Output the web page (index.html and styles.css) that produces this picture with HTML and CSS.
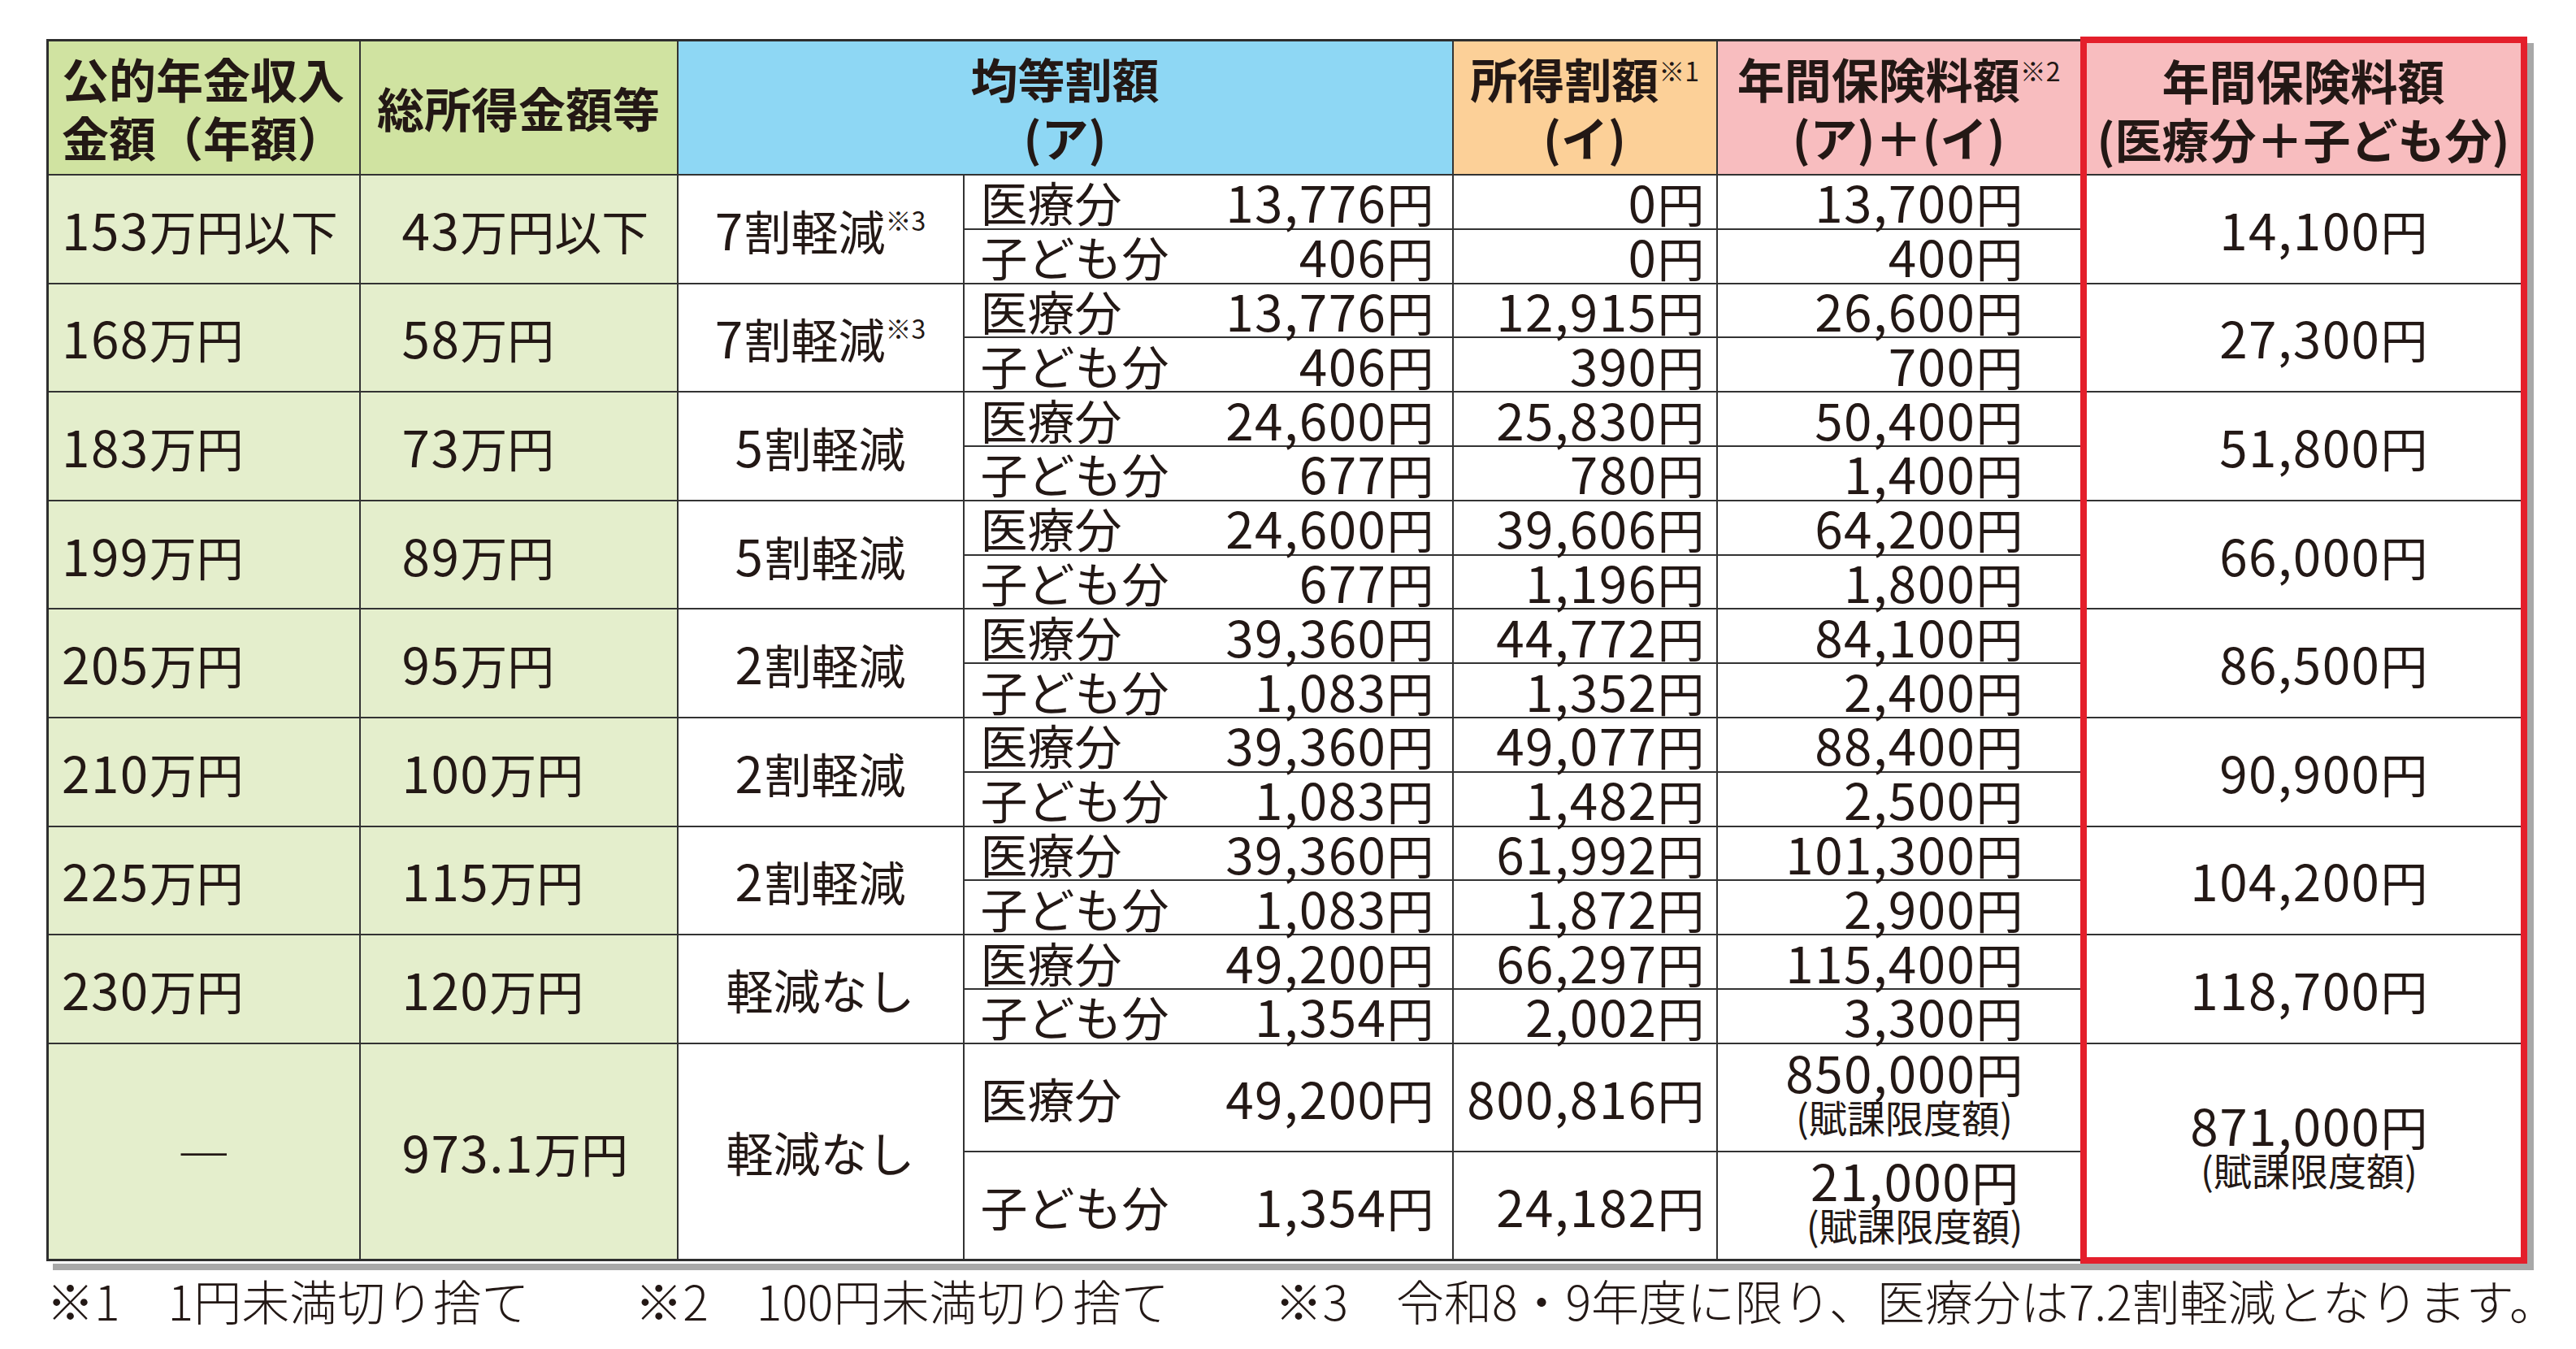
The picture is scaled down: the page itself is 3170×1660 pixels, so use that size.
FILE: index.html
```html
<!DOCTYPE html>
<html lang="ja">
<head>
<meta charset="utf-8">
<title>国民健康保険料 試算表</title>
<link rel="stylesheet" href="styles.css">
</head>
<body>
<div class="page">
  <table class="fee">
    <colgroup>
      <col class="w1"><col class="w2"><col class="w3"><col class="w4"><col class="w5"><col class="w6"><col class="w7">
    </colgroup>
    <thead>
      <tr class="hrow">
        <th class="h-green left">公的年金収入<br>金額（年額）</th>
        <th class="h-green">総所得金額等</th>
        <th class="h-blue" colspan="2">均等割額<br>(ア)</th>
        <th class="h-orange">所得割額<span class="sup">※1</span><br>(イ)</th>
        <th class="h-pink">年間保険料額<span class="sup">※2</span><br>(ア)＋(イ)</th>
        <th class="h-pink red red-top">年間保険料額<br>(医療分＋子ども分)</th>
      </tr>
    </thead>
    <tbody>
      <tr class="srow">
        <td class="g c1" rowspan="2"><span class="n">153</span>万円以下</td>
        <td class="g c2" rowspan="2"><span class="n">43</span>万円以下</td>
        <td class="c3" rowspan="2"><span class="n">7</span>割軽減<span class="sup">※3</span></td>
        <td class="c4"><div class="split"><span>医療分</span><span><span class="n">13,776</span>円</span></div></td>
        <td class="c5"><span class="n">0</span>円</td>
        <td class="c6"><span class="n">13,700</span>円</td>
        <td class="c7 red" rowspan="2"><span class="n">14,100</span>円</td>
      </tr>
      <tr class="srow">
        <td class="c4"><div class="split"><span>子ども分</span><span><span class="n">406</span>円</span></div></td>
        <td class="c5"><span class="n">0</span>円</td>
        <td class="c6"><span class="n">400</span>円</td>
      </tr>

      <tr class="srow">
        <td class="g c1" rowspan="2"><span class="n">168</span>万円</td>
        <td class="g c2" rowspan="2"><span class="n">58</span>万円</td>
        <td class="c3" rowspan="2"><span class="n">7</span>割軽減<span class="sup">※3</span></td>
        <td class="c4"><div class="split"><span>医療分</span><span><span class="n">13,776</span>円</span></div></td>
        <td class="c5"><span class="n">12,915</span>円</td>
        <td class="c6"><span class="n">26,600</span>円</td>
        <td class="c7 red" rowspan="2"><span class="n">27,300</span>円</td>
      </tr>
      <tr class="srow">
        <td class="c4"><div class="split"><span>子ども分</span><span><span class="n">406</span>円</span></div></td>
        <td class="c5"><span class="n">390</span>円</td>
        <td class="c6"><span class="n">700</span>円</td>
      </tr>

      <tr class="srow">
        <td class="g c1" rowspan="2"><span class="n">183</span>万円</td>
        <td class="g c2" rowspan="2"><span class="n">73</span>万円</td>
        <td class="c3" rowspan="2"><span class="n">5</span>割軽減</td>
        <td class="c4"><div class="split"><span>医療分</span><span><span class="n">24,600</span>円</span></div></td>
        <td class="c5"><span class="n">25,830</span>円</td>
        <td class="c6"><span class="n">50,400</span>円</td>
        <td class="c7 red" rowspan="2"><span class="n">51,800</span>円</td>
      </tr>
      <tr class="srow">
        <td class="c4"><div class="split"><span>子ども分</span><span><span class="n">677</span>円</span></div></td>
        <td class="c5"><span class="n">780</span>円</td>
        <td class="c6"><span class="n">1,400</span>円</td>
      </tr>

      <tr class="srow">
        <td class="g c1" rowspan="2"><span class="n">199</span>万円</td>
        <td class="g c2" rowspan="2"><span class="n">89</span>万円</td>
        <td class="c3" rowspan="2"><span class="n">5</span>割軽減</td>
        <td class="c4"><div class="split"><span>医療分</span><span><span class="n">24,600</span>円</span></div></td>
        <td class="c5"><span class="n">39,606</span>円</td>
        <td class="c6"><span class="n">64,200</span>円</td>
        <td class="c7 red" rowspan="2"><span class="n">66,000</span>円</td>
      </tr>
      <tr class="srow">
        <td class="c4"><div class="split"><span>子ども分</span><span><span class="n">677</span>円</span></div></td>
        <td class="c5"><span class="n">1,196</span>円</td>
        <td class="c6"><span class="n">1,800</span>円</td>
      </tr>

      <tr class="srow">
        <td class="g c1" rowspan="2"><span class="n">205</span>万円</td>
        <td class="g c2" rowspan="2"><span class="n">95</span>万円</td>
        <td class="c3" rowspan="2"><span class="n">2</span>割軽減</td>
        <td class="c4"><div class="split"><span>医療分</span><span><span class="n">39,360</span>円</span></div></td>
        <td class="c5"><span class="n">44,772</span>円</td>
        <td class="c6"><span class="n">84,100</span>円</td>
        <td class="c7 red" rowspan="2"><span class="n">86,500</span>円</td>
      </tr>
      <tr class="srow">
        <td class="c4"><div class="split"><span>子ども分</span><span><span class="n">1,083</span>円</span></div></td>
        <td class="c5"><span class="n">1,352</span>円</td>
        <td class="c6"><span class="n">2,400</span>円</td>
      </tr>

      <tr class="srow">
        <td class="g c1" rowspan="2"><span class="n">210</span>万円</td>
        <td class="g c2" rowspan="2"><span class="n">100</span>万円</td>
        <td class="c3" rowspan="2"><span class="n">2</span>割軽減</td>
        <td class="c4"><div class="split"><span>医療分</span><span><span class="n">39,360</span>円</span></div></td>
        <td class="c5"><span class="n">49,077</span>円</td>
        <td class="c6"><span class="n">88,400</span>円</td>
        <td class="c7 red" rowspan="2"><span class="n">90,900</span>円</td>
      </tr>
      <tr class="srow">
        <td class="c4"><div class="split"><span>子ども分</span><span><span class="n">1,083</span>円</span></div></td>
        <td class="c5"><span class="n">1,482</span>円</td>
        <td class="c6"><span class="n">2,500</span>円</td>
      </tr>

      <tr class="srow">
        <td class="g c1" rowspan="2"><span class="n">225</span>万円</td>
        <td class="g c2" rowspan="2"><span class="n">115</span>万円</td>
        <td class="c3" rowspan="2"><span class="n">2</span>割軽減</td>
        <td class="c4"><div class="split"><span>医療分</span><span><span class="n">39,360</span>円</span></div></td>
        <td class="c5"><span class="n">61,992</span>円</td>
        <td class="c6"><span class="n">101,300</span>円</td>
        <td class="c7 red" rowspan="2"><span class="n">104,200</span>円</td>
      </tr>
      <tr class="srow">
        <td class="c4"><div class="split"><span>子ども分</span><span><span class="n">1,083</span>円</span></div></td>
        <td class="c5"><span class="n">1,872</span>円</td>
        <td class="c6"><span class="n">2,900</span>円</td>
      </tr>

      <tr class="srow">
        <td class="g c1" rowspan="2"><span class="n">230</span>万円</td>
        <td class="g c2" rowspan="2"><span class="n">120</span>万円</td>
        <td class="c3" rowspan="2">軽減なし</td>
        <td class="c4"><div class="split"><span>医療分</span><span><span class="n">49,200</span>円</span></div></td>
        <td class="c5"><span class="n">66,297</span>円</td>
        <td class="c6"><span class="n">115,400</span>円</td>
        <td class="c7 red" rowspan="2"><span class="n">118,700</span>円</td>
      </tr>
      <tr class="srow">
        <td class="c4"><div class="split"><span>子ども分</span><span><span class="n">1,354</span>円</span></div></td>
        <td class="c5"><span class="n">2,002</span>円</td>
        <td class="c6"><span class="n">3,300</span>円</td>
      </tr>

      <tr class="lrow">
        <td class="g c1 dash" rowspan="2">―</td>
        <td class="g c2" rowspan="2"><span class="n">973.1</span>万円</td>
        <td class="c3" rowspan="2">軽減なし</td>
        <td class="c4"><div class="split"><span>医療分</span><span><span class="n">49,200</span>円</span></div></td>
        <td class="c5"><span class="n">800,816</span>円</td>
        <td class="c6"><div class="limbox"><div><span class="n">850,000</span>円</div><div class="lim">(賦課限度額)</div></div></td>
        <td class="c7 red red-bottom" rowspan="2"><div class="limbox"><div><span class="n">871,000</span>円</div><div class="lim">(賦課限度額)</div></div></td>
      </tr>
      <tr class="lrow">
        <td class="c4"><div class="split"><span>子ども分</span><span><span class="n">1,354</span>円</span></div></td>
        <td class="c5"><span class="n">24,182</span>円</td>
        <td class="c6"><div class="limbox"><div><span class="n">21,000</span>円</div><div class="lim">(賦課限度額)</div></div></td>
      </tr>
    </tbody>
  </table>

  <div class="notes">
    <span class="note">※1　1円未満切り捨て</span>
    <span class="note">※2　100円未満切り捨て</span>
    <span class="note">※3　令和8・9年度に限り、医療分は7.2割軽減となります。</span>
  </div>
</div>
</body>
</html>
```

FILE: styles.css
```css
html, body {
  margin: 0;
  padding: 0;
  background: #ffffff;
}

body {
  font-family: "Noto Sans CJK JP", "Noto Sans", sans-serif;
  color: #231815;
}

.page {
  padding: 45px 0 0 57px;
}

.fee {
  border-collapse: collapse;
  table-layout: fixed;
  width: 3047px;
  border: 3px solid #2e2e2e;
  box-shadow: 8px 8px 0 #a8a8a8;
  font-size: 58px;
  line-height: 58px;
  background: #ffffff;
}

.w1 { width: 384px; }
.w2 { width: 391px; }
.w3 { width: 352px; }
.w4 { width: 602px; }
.w5 { width: 325px; }
.w6 { width: 451px; }
.w7 { width: 542px; }

.fee th,
.fee td {
  border: 2px solid #333333;
  padding: 0;
  vertical-align: middle;
  white-space: nowrap;
}

.fee th {
  font-weight: 700;
  line-height: 72px;
  text-align: center;
}

.hrow { height: 166px; }
.srow { height: 66.8px; }
.lrow { height: 133.5px; }

.h-green { background: #d0e3a1; }
.h-blue { background: #8ed7f4; }
.h-orange { background: #fcd098; }
.h-pink { background: #f8bdbf; }

.fee th.left {
  text-align: left;
  padding-left: 16px;
}

.g { background: #e4eecc; }

.n {
  font-size: 62px;
  letter-spacing: 1.5px;
  line-height: 58px;
}

.c1 {
  text-align: left;
  padding-left: 16px !important;
}

.c1.dash {
  text-align: center;
  padding-left: 0 !important;
  font-size: 66px;
}

.c2 {
  text-align: left;
  padding-left: 51px !important;
}

.c3 { text-align: center; }

.split {
  display: flex;
  justify-content: space-between;
  align-items: center;
  padding: 0 22px 0 20px;
}

.c5 {
  text-align: right;
  padding-right: 14px !important;
}

.c6 {
  text-align: right;
  padding-right: 70px !important;
}

.c7 {
  text-align: right;
  padding-right: 114px !important;
}

.fee .red {
  border-left: 8px solid #e41f2b;
  border-right: 8px solid #e41f2b;
}

.fee .red-top { border-top: 8px solid #e41f2b; }
.fee .red-bottom { border-bottom: 8px solid #e41f2b; }

.sup {
  font-size: 32px;
  font-weight: 400;
  vertical-align: top;
  line-height: 1;
  position: relative;
  top: 2px;
}

th .sup { top: 10px; }

.limbox {
  display: flex;
  flex-direction: column;
  align-items: center;
  width: fit-content;
  margin-left: auto;
  padding-bottom: 14px;
  line-height: 58px;
}

.lim {
  font-size: 47px;
  line-height: 50px;
}

.notes {
  display: flex;
  gap: 130px;
  margin-top: 10px;
  padding-left: 0;
  font-size: 59px;
  font-weight: 300;
  line-height: 1.2;
}

.note { white-space: nowrap; }
```
